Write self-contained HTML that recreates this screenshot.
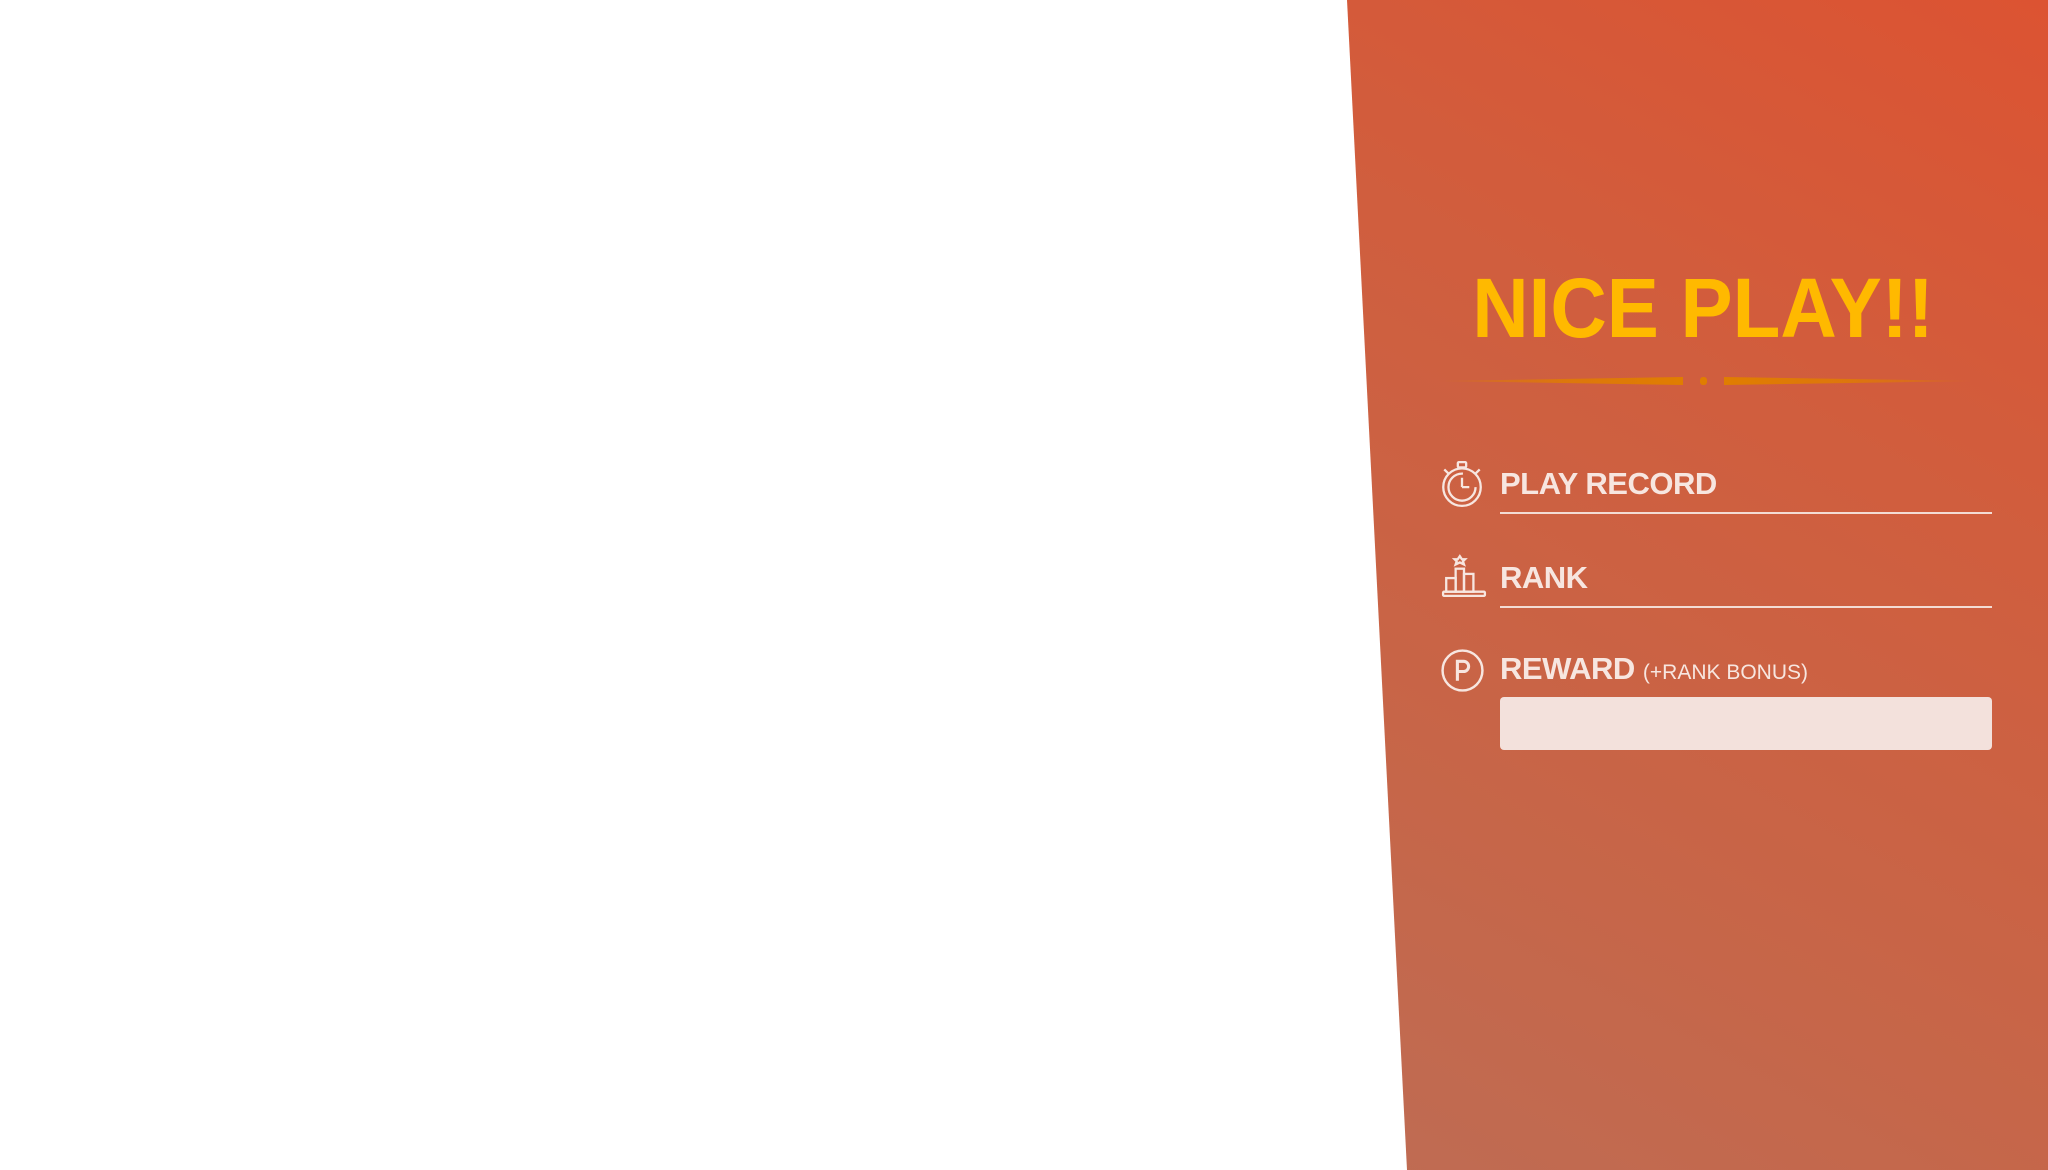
<!DOCTYPE html>
<html><head><meta charset="utf-8"><style>
html,body{margin:0;padding:0;width:2048px;height:1170px;overflow:hidden;background:#fff;font-family:"Liberation Sans",sans-serif}
.panel{position:absolute;left:0;top:0;width:2048px;height:1170px;clip-path:polygon(1347px 0,2048px 0,2048px 1170px,1407px 1170px);background:linear-gradient(208deg,#dc5332 0%,#d05e3e 25%,#c66649 50%,#bc6e57 75%,#b4745f 100%)}
.title{position:absolute;left:1353px;width:700px;top:258px;text-align:center;font-weight:bold;font-size:84px;line-height:100px;color:#ffb900;transform:scaleX(0.93);transform-origin:350px 0}
.lbl{position:absolute;left:1500px;font-weight:bold;font-size:31px;color:#f7e6e0;letter-spacing:-0.5px}
.line{position:absolute;left:1500px;width:492px;height:2px;background:#f3dcd4}
.box{position:absolute;left:1500px;top:697px;width:492px;height:53px;background:#f3e1dc;border-radius:4px}
svg{position:absolute}
</style></head><body>
<div class="panel"></div>
<div class="title">NICE PLAY!!</div>
<svg style="left:1434px;top:369px" width="545" height="24">
<defs><linearGradient id="g1" x1="0" x2="1"><stop offset="0" stop-color="#e07d00" stop-opacity="0.2"/><stop offset="0.5" stop-color="#e07d00" stop-opacity="0.8"/><stop offset="1" stop-color="#e07d00"/></linearGradient>
<linearGradient id="g2" x1="0" x2="1"><stop offset="0" stop-color="#e07d00"/><stop offset="0.5" stop-color="#e07d00" stop-opacity="0.8"/><stop offset="1" stop-color="#e07d00" stop-opacity="0.2"/></linearGradient></defs>
<polygon points="5,12 249,8 249,16" fill="url(#g1)"/>
<polygon points="290,8 538,12 290,16" fill="url(#g2)"/>
<rect x="266" y="8" width="7" height="8" rx="3" fill="#e07d00"/>
</svg>
<svg style="left:1438px;top:459px" width="48" height="50" viewBox="0 0 46 48" fill="none" stroke="#f7e6e0" stroke-width="2.2">
<circle cx="23" cy="27" r="18"/><path d="M23 27 V18 M23 27 H30"/><circle cx="23" cy="27" r="13" stroke-dasharray="62 20"/>
<rect x="19" y="3" width="8" height="5" rx="1"/><path d="M23 8 V9 M6 10 l4 4 M40 10 l-4 4"/>
</svg>
<div class="lbl" style="top:466px">PLAY RECORD</div>
<div class="line" style="top:512px"></div>
<svg style="left:1441px;top:553px" width="46" height="46" viewBox="0 0 44 44" fill="none" stroke="#f7e6e0" stroke-width="2.2">
<path d="M18 3 l2 3 3 0 -2 2 1 3 -4 -2 -4 2 1 -3 -2 -2 3 0z"/>
<rect x="14" y="15" width="8" height="22"/><rect x="5" y="24" width="9" height="13"/><rect x="22" y="20" width="9" height="17"/>
<rect x="2" y="37" width="40" height="4" rx="1"/>
</svg>
<div class="lbl" style="top:560px">RANK</div>
<div class="line" style="top:606px"></div>
<svg style="left:1440px;top:648px" width="45" height="45" viewBox="0 0 44 44" fill="none" stroke="#f7e6e0" stroke-width="2.4">
<circle cx="22" cy="22" r="19.5"/><path d="M17 32 V13 h6 a5 5 0 0 1 0 10 h-6" stroke-width="3"/>
</svg>
<div class="lbl" style="top:651px">REWARD <span style="font-size:21px;font-weight:normal;letter-spacing:0">(+RANK BONUS)</span></div>
<div class="box"></div>
</body></html>
